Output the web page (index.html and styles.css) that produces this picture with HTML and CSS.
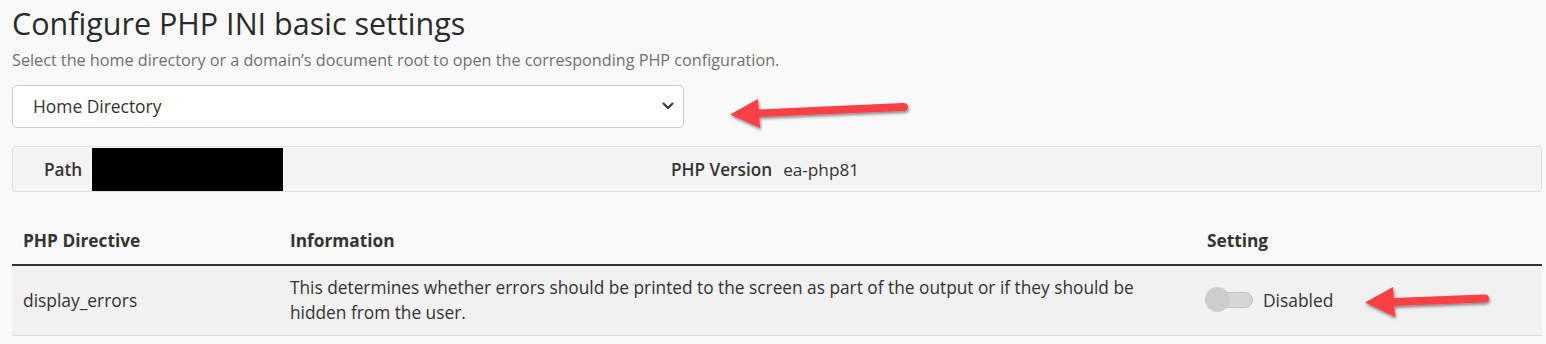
FILE: index.html
```html
<!DOCTYPE html>
<html lang="en">
<head>
    <meta charset="UTF-8">
    <title>MultiPHP INI Editor</title>
    <link rel="stylesheet" href="styles.css">
</head>
<body>
    <main class="page">
        <h1 class="page-title">Configure PHP INI basic settings</h1>
        <p class="page-desc">Select the home directory or a domain’s document root to open the corresponding PHP configuration.</p>

        <div class="select-row">
            <div class="select-box">
                <span>Home Directory</span>
                <svg class="caret" width="12" height="8" viewBox="0 0 12 8">
                    <path d="M1.5 1.5 L6 6 L10.5 1.5" fill="none" stroke="#333" stroke-width="2" stroke-linecap="round" stroke-linejoin="round"/>
                </svg>
            </div>
            <svg class="arrow arrow-select" width="190" height="40" viewBox="0 0 190 40">
                <g filter="url(#shadow1)">
                    <path d="M36 21.5 L181 15 Q186 15 186 19 Q186 23 181 23 L36 29 Z" fill="#f94144"/>
                    <polygon points="8,26.5 36,11 38,40 " fill="#f94144"/>
                </g>
                <defs>
                    <filter id="shadow1" x="-10%" y="-30%" width="120%" height="180%">
                        <feDropShadow dx="1" dy="2" stdDeviation="1.5" flood-color="#000" flood-opacity="0.45"/>
                    </filter>
                </defs>
            </svg>
        </div>

        <div class="info-panel">
            <div class="info-path">
                <span class="info-label">Path</span>
                <span class="redacted"></span>
            </div>
            <div class="info-version">
                <span class="info-label">PHP Version</span>
                <span>ea-php81</span>
            </div>
        </div>

        <table class="directives">
            <thead>
                <tr>
                    <th class="col-name">PHP Directive</th>
                    <th class="col-info">Information</th>
                    <th class="col-setting">Setting</th>
                </tr>
            </thead>
            <tbody>
                <tr>
                    <td>display_errors</td>
                    <td>This determines whether errors should be printed to the screen as part of the output or if they should be hidden from the user.</td>
                    <td>
                        <div class="setting">
                            <span class="toggle"><span class="knob"></span></span>
                            <span class="toggle-label">Disabled</span>
                            <svg class="arrow arrow-setting" width="130" height="36" viewBox="0 0 130 36">
                                <g filter="url(#shadow2)">
                                    <path d="M30 14 L121 10.5 Q126 10.5 126 14.5 Q126 18.5 121 18.5 L30 22 Z" fill="#f94144"/>
                                    <polygon points="2,18.5 30,3 32,33" fill="#f94144"/>
                                </g>
                                <defs>
                                    <filter id="shadow2" x="-10%" y="-30%" width="120%" height="180%">
                                        <feDropShadow dx="1" dy="2" stdDeviation="1.5" flood-color="#000" flood-opacity="0.45"/>
                                    </filter>
                                </defs>
                            </svg>
                        </div>
                    </td>
                </tr>
            </tbody>
        </table>
    </main>
</body>
</html>
```

FILE: styles.css
```css
body {
    margin: 0;
    padding: 0;
    background-color: #f9f9f9;
    font-family: 'Open Sans', sans-serif;
    color: #333;
}

.page {
    padding: 0 4px 0 12px;
}

.page-title {
    margin: 0;
    padding-top: 4px;
    font-size: 30.5px;
    font-weight: 400;
    line-height: 38px;
    color: #2b2b2b;
}

.page-desc {
    margin: 7px 0 0 0;
    font-size: 16.2px;
    line-height: 22px;
    color: #707070;
}

.select-row {
    display: flex;
    align-items: center;
    margin-top: 13px;
}

.select-box {
    width: 672px;
    height: 43px;
    box-sizing: border-box;
    display: flex;
    align-items: center;
    justify-content: space-between;
    padding: 0 9px 0 20px;
    background-color: #fff;
    border: 1px solid #ccc;
    border-radius: 5px;
    font-size: 17.4px;
    color: #333;
}

.arrow {
    display: block;
    overflow: visible;
}

.arrow-select {
    margin-left: 38px;
    margin-top: 4px;
}

.info-panel {
    display: flex;
    align-items: center;
    margin-top: 18px;
    height: 46px;
    box-sizing: border-box;
    background-color: #f4f4f4;
    border: 1px solid #e0e0e0;
    border-radius: 3px;
    font-size: 17.2px;
}

.info-path {
    flex: none;
    width: 627px;
    display: flex;
    align-items: center;
    height: 100%;
    padding-left: 31px;
}

.info-version {
    flex: 1;
    display: flex;
    align-items: center;
    gap: 11px;
}

.info-label {
    font-weight: 600;
}

.info-path .info-label {
    margin-right: 10px;
}

.redacted {
    display: block;
    width: 191px;
    height: 43px;
    background-color: #000;
}

.directives {
    width: 100%;
    margin-top: 30px;
    border-collapse: collapse;
    font-size: 17.3px;
}

.directives th {
    text-align: left;
    font-weight: 700;
    font-size: 17.3px;
    padding: 7px 11px 11px 11px;
    line-height: 24px;
    border-bottom: 2px solid #333;
}

.col-name {
    width: 245px;
}

.col-setting {
    width: 324px;
}

.directives td {
    background-color: #f1f1f1;
    padding: 9px 11px 10px 11px;
    line-height: 25px;
    vertical-align: middle;
    border-bottom: 1px solid #ddd;
}

.directives td:first-child {
    font-size: 17.4px;
}

.setting {
    display: flex;
    align-items: center;
    font-size: 17.4px;
}

.toggle {
    position: relative;
    display: block;
    width: 46px;
    height: 14px;
    margin-left: -2px;
    background-color: #d6d6d6;
    border: 1px solid #c2c2c2;
    border-radius: 8px;
}

.knob {
    position: absolute;
    left: -1px;
    top: -6px;
    width: 25px;
    height: 25px;
    border-radius: 50%;
    background-color: #cdcdcd;
}

.toggle-label {
    margin-left: 10px;
}

.arrow-setting {
    margin-left: 30px;
    margin-top: 4px;
}
```
